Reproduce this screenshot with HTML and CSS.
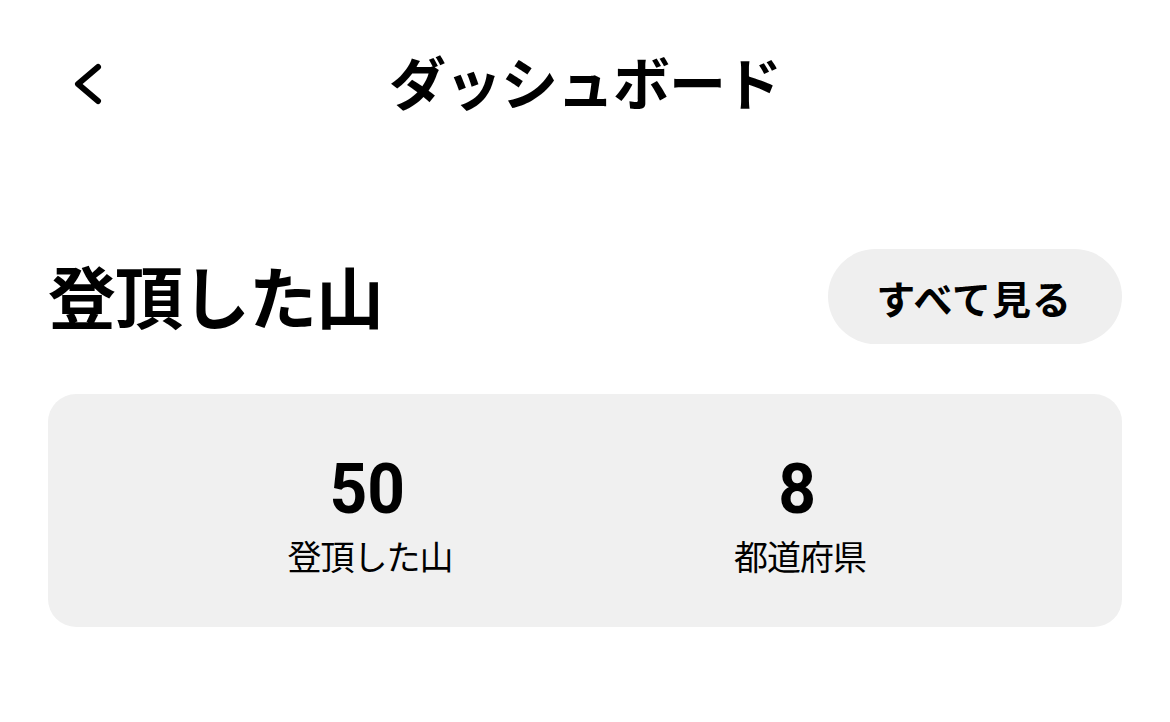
FILE: index.html
```html
<!DOCTYPE html>
<html lang="ja">
<head>
    <meta charset="UTF-8">
    <meta name="viewport" content="width=device-width, initial-scale=1.0">
    <title>ダッシュボード</title>
    <link rel="stylesheet" href="styles.css">
</head>
<body>
    <div class="page">
        <header class="top-bar">
            <div class="back-btn">
                <svg width="34" height="44" viewBox="0 0 34 44" fill="none">
                    <path d="M27 5 L7 22 L27 39" stroke="#000" stroke-width="6" stroke-linecap="round" stroke-linejoin="round"/>
                </svg>
            </div>
            <h1 class="top-title">ダッシュボード</h1>
            <div></div>
        </header>

        <section class="summits">
            <div class="section-head">
                <h2 class="section-title">登頂した山</h2>
                <button class="see-all">すべて見る</button>
            </div>

            <div class="stats-card">
                <div class="stat">
                    <span class="stat-num">50</span>
                    <span class="stat-label">登頂した山</span>
                </div>
                <div class="stat">
                    <span class="stat-num">8</span>
                    <span class="stat-label">都道府県</span>
                </div>
            </div>
        </section>
    </div>
</body>
</html>
```

FILE: styles.css
```css
*{
    margin: 0;
    padding: 0;
    box-sizing: border-box;
}

body{
    background: #fff;
    color: #000;
    font-family: "Noto Sans CJK JP", "Noto Sans", sans-serif;
}

.page{
    padding: 0 48px;
}

.top-bar{
    display: grid;
    grid-template-columns: 1fr auto 1fr;
    align-items: center;
    height: 172px;
}

.back-btn{
    display: flex;
    align-items: center;
    padding-left: 23px;
    margin-bottom: 4px;
}

.top-title{
    margin-bottom: 12px;
    font-size: 57px;
    font-weight: 700;
    letter-spacing: -1px;
}

.section-head{
    display: flex;
    justify-content: space-between;
    align-items: center;
    margin-top: 73px;
}

.section-title{
    margin-bottom: 4px;
    font-size: 68px;
    font-weight: 700;
    letter-spacing: -1px;
}

.see-all{
    height: 95px;
    padding: 0 50px 0 48px;
    border: none;
    border-radius: 48px;
    background: #efefef;
    color: #000;
    font-family: "Noto Sans CJK JP", sans-serif;
    font-size: 39px;
    font-weight: 700;
    letter-spacing: 1px;
}

.stats-card{
    display: grid;
    grid-template-columns: 430px 430px;
    justify-content: center;
    margin-top: 46px;
    padding: 59px 0 54px;
    background: #f0f0f0;
    border-radius: 28px;
}

.stat{
    display: flex;
    flex-direction: column;
    align-items: center;
}

.stat-num{
    display: inline-block;
    margin-right: 6px;
    font-family: Roboto, "Liberation Sans", sans-serif;
    font-size: 70px;
    font-weight: 700;
    line-height: 72px;
    transform: scaleX(0.94);
}

.stat-label{
    margin-top: 14px;
    font-size: 34px;
    line-height: 34px;
    letter-spacing: -1px;
}
```
